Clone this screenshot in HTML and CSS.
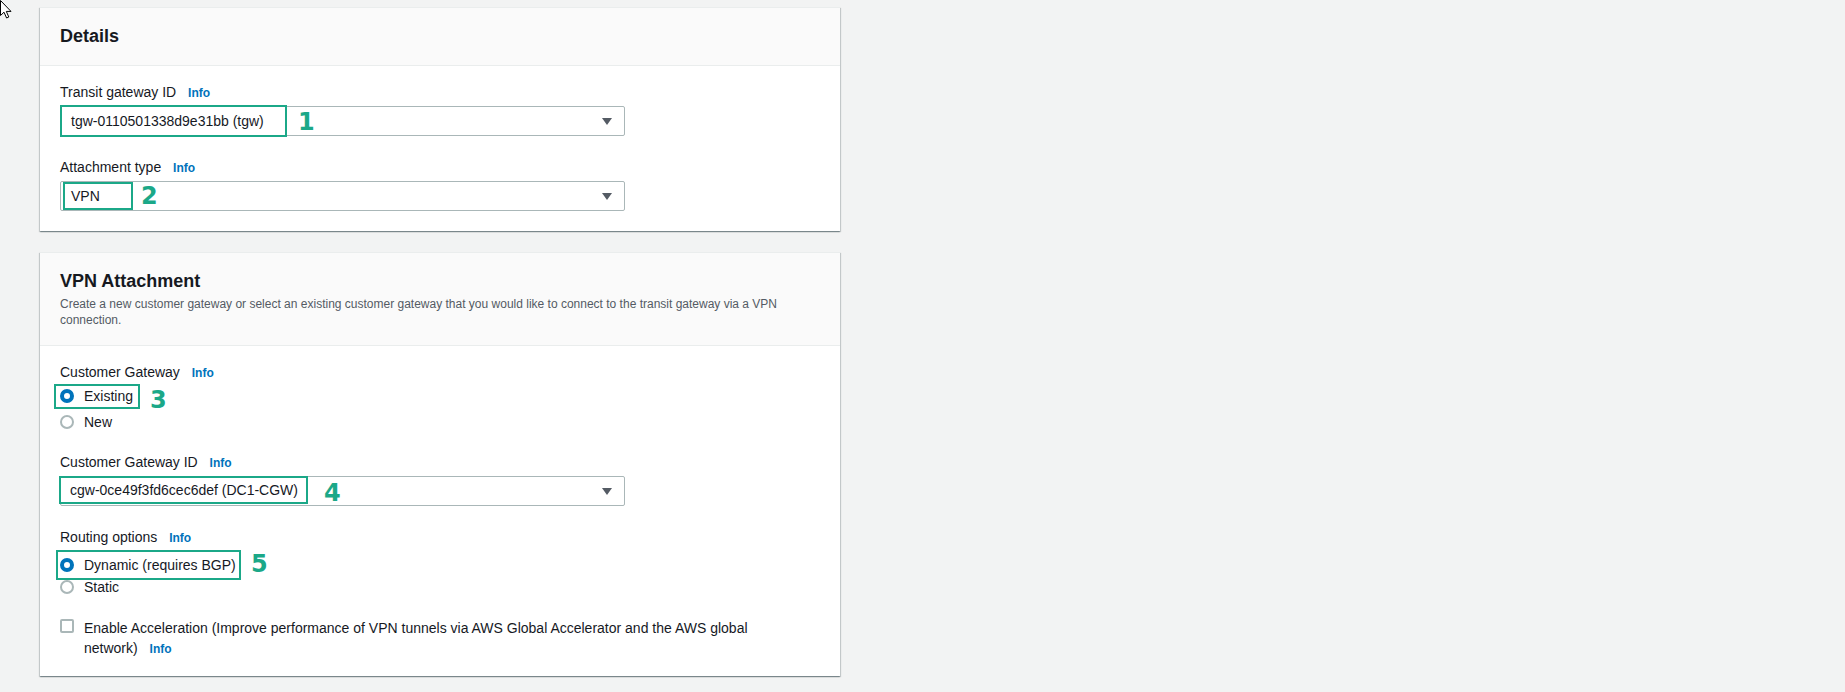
FILE: index.html
```html
<!DOCTYPE html>
<html lang="en">
<head>
<meta charset="utf-8">
<title>Create Transit Gateway Attachment</title>
<link rel="stylesheet" href="styles.css">
</head>
<body>
<svg class="cursor" width="13" height="19" viewBox="0 0 13 19" aria-hidden="true">
  <path d="M0.5 0.5 L0.5 15.5 L4 12.2 L6.6 18 L8.8 17 L6.3 11.4 L11 11.4 Z" fill="#fff" stroke="#000" stroke-width="1" stroke-linejoin="round"/>
</svg>

<main class="page">
  <section class="card">
    <header class="card-header">
      <h2 class="card-title">Details</h2>
    </header>
    <div class="card-body">
      <div class="field">
        <div class="field-label">Transit gateway ID <a class="info" href="#">Info</a></div>
        <div class="select">
          <span class="mark mark-tgw">tgw-0110501338d9e31bb (tgw)</span>
          <span class="mark-num num-tgw">1</span>
          <svg class="caret" width="10" height="7" viewBox="0 0 10 7"><path d="M0 0H10L5 7Z"/></svg>
        </div>
      </div>
      <div class="field">
        <div class="field-label">Attachment type <a class="info" href="#">Info</a></div>
        <div class="select">
          <span class="mark mark-type">VPN</span>
          <span class="mark-num num-type">2</span>
          <svg class="caret" width="10" height="7" viewBox="0 0 10 7"><path d="M0 0H10L5 7Z"/></svg>
        </div>
      </div>
    </div>
  </section>

  <section class="card">
    <header class="card-header">
      <h2 class="card-title">VPN Attachment</h2>
      <p class="card-desc">Create a new customer gateway or select an existing customer gateway that you would like to connect to the transit gateway via a VPN connection.</p>
    </header>
    <div class="card-body">
      <div class="field">
        <div class="field-label">Customer Gateway <a class="info" href="#">Info</a></div>
        <div class="radio-row">
          <span class="mark-row mark-existing"><span class="radio is-checked"></span><span>Existing</span></span>
          <span class="mark-num num-existing">3</span>
        </div>
        <div class="radio-row">
          <span class="radio"></span><span>New</span>
        </div>
      </div>
      <div class="field field-tight">
        <div class="field-label">Customer Gateway ID <a class="info" href="#">Info</a></div>
        <div class="select">
          <span class="mark mark-cgw">cgw-0ce49f3fd6cec6def (DC1-CGW)</span>
          <span class="mark-num num-cgw">4</span>
          <svg class="caret" width="10" height="7" viewBox="0 0 10 7"><path d="M0 0H10L5 7Z"/></svg>
        </div>
      </div>
      <div class="field">
        <div class="field-label">Routing options <a class="info" href="#">Info</a></div>
        <div class="radio-row">
          <span class="mark-row mark-dynamic"><span class="radio is-checked"></span><span>Dynamic (requires BGP)</span></span>
          <span class="mark-num num-dynamic">5</span>
        </div>
        <div class="radio-row">
          <span class="radio"></span><span>Static</span>
        </div>
      </div>
      <div class="field">
        <label class="checkbox-row">
          <span class="checkbox"></span>
          <span class="checkbox-text">Enable Acceleration (Improve performance of VPN tunnels via AWS Global Accelerator and the AWS global network) <a class="info" href="#">Info</a></span>
        </label>
      </div>
    </div>
  </section>
</main>
</body>
</html>
```

FILE: styles.css
```css
* {
  box-sizing: border-box;
}

body {
  margin: 0;
  background: #f2f3f3;
  color: #16191f;
  font-family: "Liberation Sans", Arial, sans-serif;
  font-size: 14px;
  line-height: 22px;
}

/* pointer sitting in the corner of the window */
.cursor {
  position: absolute;
  left: 0;
  top: 0;
}

.page {
  width: 840px;
  padding: 7px 0 20px 40px;
}

/* form section cards */
.card {
  background: #fff;
  border-top: 1px solid #eaeded;
  box-shadow:
    0 1px 1px 0 rgba(0, 28, 36, 0.3),
    1px 1px 1px 0 rgba(0, 28, 36, 0.15),
    -1px 1px 1px 0 rgba(0, 28, 36, 0.15);
  margin-bottom: 21px;
}

.card-header {
  background: #fafafa;
  border-bottom: 1px solid #eaeded;
  padding: 17px 20px 18px;
}

.card-header:has(.card-desc) {
  padding-bottom: 17px;
}

.card-title {
  margin: 0;
  font-size: 18px;
  line-height: 22px;
  font-weight: 700;
}

.card-desc {
  margin: 4px 0 0;
  font-size: 12px;
  line-height: 16px;
  color: #545b64;
}

.card-body {
  padding: 15px 20px 20px;
}

.card-body:has(.checkbox-row) {
  padding-bottom: 18px;
}

.field + .field {
  margin-top: 20px;
}

.field + .field-tight {
  margin-top: 18px;
}

.field-label {
  height: 22px;
  line-height: 22px;
}

.info {
  margin-left: 8px;
  font-size: 12px;
  line-height: 14px;
  font-weight: 700;
  color: #0073bb;
  text-decoration: none;
}

/* select control */
.select {
  display: flex;
  align-items: center;
  width: 565px;
  height: 30px;
  margin-top: 3px;
  border: 1px solid #aab7b8;
  border-radius: 2px;
  background: #fff;
}

.caret {
  margin-left: auto;
  margin-right: 12px;
  fill: #545b64;
}

/* teal callout boxes and step numbers */
.mark,
.mark-row {
  display: flex;
  align-items: center;
  flex: none;
  border: 2px solid #1ba888;
}

.mark-tgw {
  width: 227px;
  height: 32px;
  margin-left: -1px;
  padding-left: 9px;
}

.mark-type {
  width: 70px;
  height: 28px;
  margin-left: 2px;
  padding-left: 6px;
}

.mark-cgw {
  width: 249px;
  height: 28px;
  margin: -2px 0 0 -2px;
  padding-left: 9px;
}

.mark-num {
  flex: none;
  color: #1ba888;
  font-family: "DejaVu Sans", "Liberation Sans", sans-serif;
  font-weight: 700;
  font-size: 24px;
  line-height: 24px;
}

.num-tgw {
  margin-left: 11px;
  margin-top: 2px;
}

.num-type {
  margin-left: 8px;
}

.num-cgw {
  margin-left: 16px;
  margin-top: 4px;
}

.num-existing {
  margin-left: 10px;
  margin-top: 6px;
}

.num-dynamic {
  margin-left: 10px;
  margin-top: 4px;
}

/* radio groups */
.radio-row {
  display: flex;
  align-items: center;
  height: 22px;
  margin-top: 3px;
}

.radio {
  flex: none;
  width: 14px;
  height: 14px;
  margin-right: 10px;
  border: 2px solid #aab7b8;
  border-radius: 50%;
  background: #fff;
}

.radio.is-checked {
  border: 4px solid #0073bb;
}

.mark-row {
  margin-left: -6px;
}

.mark-existing {
  width: 86px;
  height: 25px;
  padding-left: 4px;
  margin-top: -2px;
}

.mark-dynamic {
  width: 185px;
  height: 30px;
  padding-left: 2px;
  margin-left: -4px;
  margin-top: 6px;
}

/* checkbox */
.checkbox-row {
  display: flex;
  align-items: flex-start;
  line-height: 20px;
}

.checkbox {
  flex: none;
  width: 14px;
  height: 14px;
  margin: 1px 10px 0 0;
  border: 2px solid #aab7b8;
  border-radius: 2px;
  background: #fff;
}

.checkbox-text {
  max-width: 700px;
}
```
